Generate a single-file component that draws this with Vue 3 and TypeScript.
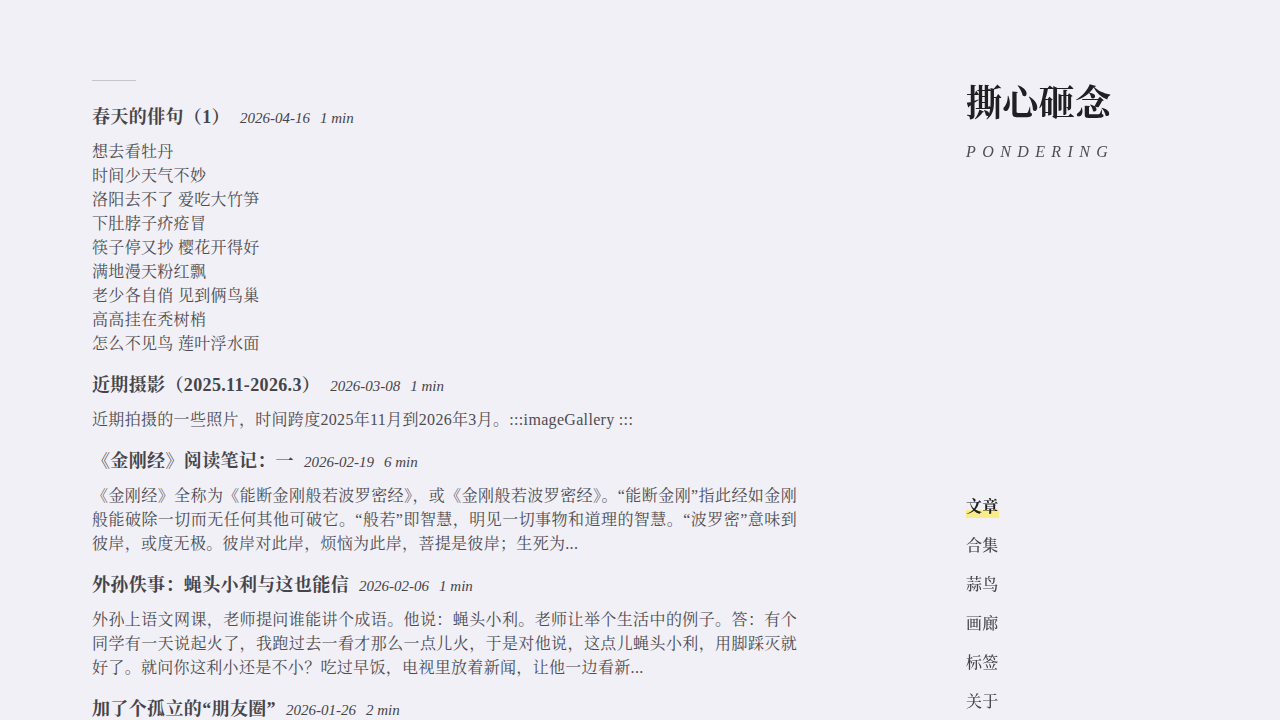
<script setup lang="ts">
import { ref } from 'vue'

interface Post {
  title: string
  date: string
  minutes: number
  excerpt: string[]
}

const posts: Post[] = [
  {
    title: '春天的俳句（1）',
    date: '2026-04-16',
    minutes: 1,
    excerpt: [
      '想去看牡丹',
      '时间少天气不妙',
      '洛阳去不了 爱吃大竹笋',
      '下肚脖子疥疮冒',
      '筷子停又抄 樱花开得好',
      '满地漫天粉红飘',
      '老少各自俏 见到俩鸟巢',
      '高高挂在秃树梢',
      '怎么不见鸟 莲叶浮水面',
    ],
  },
  {
    title: '近期摄影（2025.11-2026.3）',
    date: '2026-03-08',
    minutes: 1,
    excerpt: ['近期拍摄的一些照片，时间跨度2025年11月到2026年3月。:::imageGallery :::'],
  },
  {
    title: '《金刚经》阅读笔记：一',
    date: '2026-02-19',
    minutes: 6,
    excerpt: [
      '《金刚经》全称为《能断金刚般若波罗密经》，或《金刚般若波罗密经》。“能断金刚”指此经如金刚般能破除一切而无任何其他可破它。“般若”即智慧，明见一切事物和道理的智慧。“波罗密”意味到彼岸，或度无极。彼岸对此岸，烦恼为此岸，菩提是彼岸；生死为...',
    ],
  },
  {
    title: '外孙佚事：蝇头小利与这也能信',
    date: '2026-02-06',
    minutes: 1,
    excerpt: [
      '外孙上语文网课，老师提问谁能讲个成语。他说：蝇头小利。老师让举个生活中的例子。答：有个同学有一天说起火了，我跑过去一看才那么一点儿火，于是对他说，这点儿蝇头小利，用脚踩灭就好了。就问你这利小还是不小？吃过早饭，电视里放着新闻，让他一边看新...',
    ],
  },
  { title: '加了个孤立的“朋友圈”', date: '2026-01-26', minutes: 2, excerpt: [] },
]

const sections: string[] = ['文章', '合集', '蒜鸟', '画廊', '标签', '关于']
const current = ref('文章')
</script>

<template>
  <div class="page" lang="zh-CN">
    <main class="posts">
      <hr class="rule" />
      <article v-for="post in posts" :key="post.date" class="post">
        <header class="head">
          <h2 class="title"><a href="#">{{ post.title }}</a></h2>
          <time class="meta" :datetime="post.date">{{ post.date }}</time>
          <span class="meta">{{ post.minutes }} min</span>
        </header>
        <div v-if="post.excerpt.length" class="excerpt">
          <p v-for="line in post.excerpt" :key="line">{{ line }}</p>
        </div>
      </article>
    </main>

    <aside class="side">
      <h1 class="site">撕心砸念</h1>
      <p class="tagline">PONDERING</p>
      <nav class="nav">
        <a
          v-for="name in sections"
          :key="name"
          href="#"
          :class="{ active: name === current }"
          @click.prevent="current = name"
        >{{ name }}</a>
      </nav>
    </aside>
  </div>
</template>

<style>
body {
  margin: 0;
  background: #f1f0f6;
}
</style>

<style scoped>
.page {
  display: grid;
  grid-template-columns: minmax(0, 1fr) 222px;
  column-gap: 169px;
  height: 100vh;
  box-sizing: border-box;
  padding: 0 92px;
  overflow: hidden auto;
  scrollbar-width: none;
  background: #f1f0f6;
  color: #4d4c51;
  font-family: "Liberation Serif", "Noto Serif CJK SC", "Noto Sans CJK SC", serif;
  font-size: 16px;
  line-height: 24px;
  letter-spacing: 0.02em;
}

a {
  color: inherit;
  text-decoration: none;
}

.posts {
  padding-top: 80px;
}

.rule {
  width: 44px;
  height: 1px;
  margin: 0 0 21px;
  border: 0;
  background: #c6c5cb;
}

.post {
  margin-bottom: 14px;
}

.head {
  display: flex;
  align-items: baseline;
  gap: 10px;
  color: #454449;
}

.title {
  margin: 0;
  font-size: 18px;
  line-height: 30px;
  font-weight: 700;
  letter-spacing: 0.02em;
}

.meta {
  font-size: 15px;
  line-height: 24px;
  font-style: italic;
  letter-spacing: 0;
}

.excerpt {
  margin-top: 8px;
  text-align: justify;
}

.excerpt p {
  margin: 0;
}

.side {
  position: sticky;
  top: 0;
  display: flex;
  flex-direction: column;
  height: 100vh;
  box-sizing: border-box;
  padding: 81px 0 6px;
}

.site {
  margin: 0;
  color: #202024;
  font-size: 36px;
  line-height: 46px;
  font-weight: 700;
  letter-spacing: 0.01em;
}

.tagline {
  margin: 13px 0 0;
  font-style: italic;
  letter-spacing: 0.4em;
}

.nav {
  display: flex;
  flex-direction: column;
  align-items: flex-start;
  gap: 15px;
  margin-top: auto;
  color: #454449;
  font-weight: 500;
}

.active {
  color: #202024;
  font-weight: 700;
  background: linear-gradient(#f9ec8a, #f9ec8a) 0 15px / 100% 8px no-repeat;
}
</style>
